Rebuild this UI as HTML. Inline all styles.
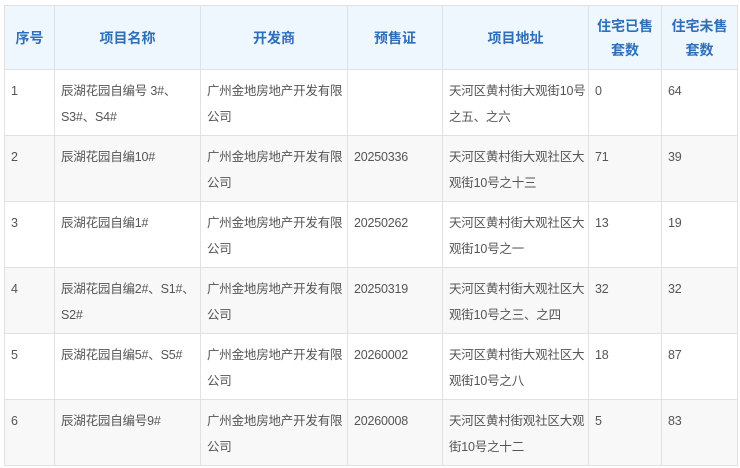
<!DOCTYPE html>
<html><head><meta charset="utf-8"><style>
body{margin:0;background:#fff;font-family:"Liberation Sans","Noto Sans CJK SC",sans-serif;}
table{position:absolute;left:4px;top:5px;border-collapse:collapse;table-layout:fixed;width:733px;}
td,th{border:1px solid #e1e1e1;vertical-align:top;padding:8px 0 0 6px;font-size:12.5px;letter-spacing:-0.2px;line-height:26px;color:#555;text-align:left;overflow:hidden;}
th{background:#eef6fe;color:#2f6fba;font-weight:bold;font-size:14px;letter-spacing:0;text-align:center;vertical-align:middle;padding:0 4px;line-height:24px;height:63px;}
td div{height:57px;overflow:hidden;}
tr.g td{background:#f8f8f8;}
</style></head><body>
<table>
<colgroup><col style="width:50px"><col style="width:146px"><col style="width:147px"><col style="width:95px"><col style="width:146px"><col style="width:73px"><col style="width:76px"></colgroup>
<tr><th>序号</th><th>项目名称</th><th>开发商</th><th>预售证</th><th>项目地址</th><th>住宅已售套数</th><th>住宅未售套数</th></tr>
<tr><td><div>1</div></td><td><div>辰湖花园自编号 3#、S3#、S4#</div></td><td><div>广州金地房地产开发有限公司</div></td><td><div></div></td><td><div>天河区黄村街大观街10号之五、之六</div></td><td><div>0</div></td><td><div>64</div></td></tr>
<tr class="g"><td><div>2</div></td><td><div>辰湖花园自编10#</div></td><td><div>广州金地房地产开发有限公司</div></td><td><div>20250336</div></td><td><div>天河区黄村街大观社区大观街10号之十三</div></td><td><div>71</div></td><td><div>39</div></td></tr>
<tr><td><div>3</div></td><td><div>辰湖花园自编1#</div></td><td><div>广州金地房地产开发有限公司</div></td><td><div>20250262</div></td><td><div>天河区黄村街大观社区大观街10号之一</div></td><td><div>13</div></td><td><div>19</div></td></tr>
<tr class="g"><td><div>4</div></td><td><div>辰湖花园自编2#、S1#、S2#</div></td><td><div>广州金地房地产开发有限公司</div></td><td><div>20250319</div></td><td><div>天河区黄村街大观社区大观街10号之三、之四</div></td><td><div>32</div></td><td><div>32</div></td></tr>
<tr><td><div>5</div></td><td><div>辰湖花园自编5#、S5#</div></td><td><div>广州金地房地产开发有限公司</div></td><td><div>20260002</div></td><td><div>天河区黄村街大观社区大观街10号之八</div></td><td><div>18</div></td><td><div>87</div></td></tr>
<tr class="g"><td><div>6</div></td><td><div>辰湖花园自编号9#</div></td><td><div>广州金地房地产开发有限公司</div></td><td><div>20260008</div></td><td><div>天河区黄村街观社区大观街10号之十二</div></td><td><div>5</div></td><td><div>83</div></td></tr>
</table>
</body></html>
